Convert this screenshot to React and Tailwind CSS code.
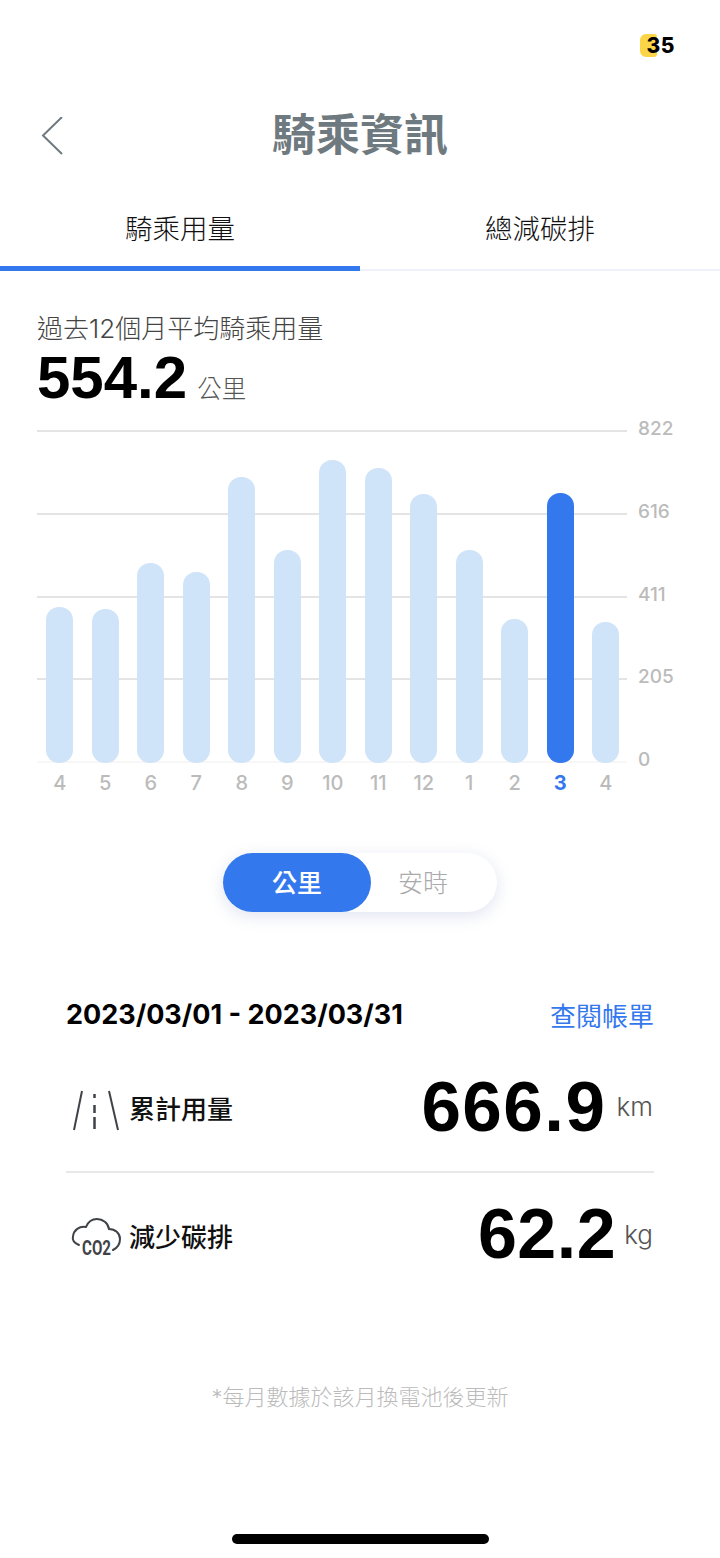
const FONT = "font-['Inter','Noto_Sans_CJK_TC',sans-serif]"
const NUM = "font-['Liberation_Sans',sans-serif]"

const bars = [
  { month: 4, top: 607 },
  { month: 5, top: 609 },
  { month: 6, top: 563 },
  { month: 7, top: 572 },
  { month: 8, top: 477 },
  { month: 9, top: 550 },
  { month: 10, top: 460 },
  { month: 11, top: 468 },
  { month: 12, top: 494 },
  { month: 1, top: 550 },
  { month: 2, top: 619 },
  { month: 3, top: 493, active: true },
  { month: 4, top: 622 },
]

const axis = ['822', '616', '411', '205', '0']

function RoadIcon() {
  return (
    <svg width="60" height="50" viewBox="0 0 60 50" fill="none" stroke="#3f4347" strokeWidth="2">
      <path d="M16 7 L8 46" />
      <path d="M43 7 L52 46" />
      <path d="M28.5 10 V14 M28.5 21 V29 M28.5 33 V45" strokeWidth="2.5" />
    </svg>
  )
}

function CloudIcon() {
  return (
    <svg width="60" height="50" viewBox="0 0 60 50" fill="none" stroke="#3f4347" strokeWidth="2" strokeLinecap="round">
      <path d="M13 33 C8 31 6 28 7 24 C8 18 13 14 20 15 C22 10 26 7 31 7 C37 7 42 11 43 17 C49 17 54 21 54 27 C54 32 51 36 47 38" />
      <text x="16" y="43" fontSize="20" fontWeight="700" fill="#3f4347" stroke="none" textLength="29" lengthAdjust="spacingAndGlyphs" fontFamily="Roboto, sans-serif">CO2</text>
    </svg>
  )
}

export default function App() {
  return (
    <div className={`${FONT} relative w-[720px] h-[1558px] bg-white overflow-hidden`}>

      {/* status bar */}
      <div className="h-[90px] flex justify-end items-start pt-[34px] pr-[45px]">
        <div className="relative h-[23px] flex items-center pl-[6px]">
          <span className="absolute left-[-1px] top-0 w-[17px] h-[23px] rounded-l-[6px] rounded-r-[3px] bg-[#fbd548]" />
          <span className="relative text-[21px] leading-none font-extrabold text-black tracking-[0.5px]">35</span>
        </div>
      </div>

      {/* header */}
      <div className="relative h-[90px] flex items-center justify-center">
        <svg className="absolute left-[41px] top-[27px]" width="24" height="38" viewBox="0 0 24 38" fill="none" stroke="#6f7a80" strokeWidth="2">
          <path d="M21 0 L2 18.5 L21 37" />
        </svg>
        <h1 className="text-[44px] leading-none font-bold text-[#6f7a80]">騎乘資訊</h1>
      </div>

      {/* tabs */}
      <div className="flex h-[91px] border-b-2 border-[#eef0fb]">
        <div className="w-1/2 h-[91px] border-b-[5px] border-[#3478ee] flex justify-center pt-[29px]">
          <span className="text-[27.5px] leading-[40px] font-light text-[#111]">騎乘用量</span>
        </div>
        <div className="w-1/2 flex justify-center pt-[29px]">
          <span className="text-[27.5px] leading-[40px] font-light text-[#111]">總減碳排</span>
        </div>
      </div>

      {/* summary */}
      <div className="px-[37px] pt-[38px]">
        <p className="text-[26px] leading-[40px] font-light text-[#444]">過去12個月平均騎乘用量</p>
        <div className="flex items-baseline gap-[10px] h-[58px]">
          <span className={`${NUM} text-[60px] leading-[58px] font-bold text-black`}>554.2</span>
          <span className="text-[24.5px] font-light text-[#555]">公里</span>
        </div>
      </div>

      {/* chart */}
      <div className="relative h-[333px] mt-[23px]">
        <div className="absolute inset-0 flex flex-col justify-between">
          {axis.map((v, i) => (
            <div key={v} className="relative h-[2px] ml-[37px] w-[590px] bg-[#e4e4e4]" style={i === 4 ? { backgroundColor: '#f7f7f7' } : undefined}>
              <span className="absolute left-[601px] top-[-12px] text-[19px] leading-[22px] font-medium text-[#bbbbbb]">{v}</span>
            </div>
          ))}
        </div>
        <div className="relative h-[333px] pl-[37px] flex items-end">
          {bars.map((b, i) => (
            <div key={i} className="w-[45.5px] flex justify-center">
              <div
                className={`w-[27px] rounded-[13px] ${b.active ? 'bg-[#3478ee]' : 'bg-[#cfe3f9]'}`}
                style={{ height: 763 - b.top }}
              />
            </div>
          ))}
        </div>
      </div>

      {/* months */}
      <div className="flex pl-[37px] h-[30px] pt-[8px]">
        {bars.map((b, i) => (
          <div
            key={i}
            className={`w-[45.5px] text-center text-[20px] leading-[24px] ${b.active ? 'font-bold text-[#3478ee]' : 'font-medium text-[#bbbbbb]'}`}
          >
            {b.month}
          </div>
        ))}
      </div>

      {/* unit toggle */}
      <div className="flex justify-center pt-[60px]">
        <div className="w-[274px] h-[59px] flex rounded-full bg-white shadow-[0_4px_16px_rgba(120,130,190,0.22)]">
          <div className="w-[148px] rounded-full bg-[#3478ee] flex items-center justify-center pt-[3px] text-[25px] font-medium text-white">公里</div>
          <div className="flex-1 flex items-center justify-center pt-[3px] pr-[22px] text-[25px] font-light text-[#aaaaaa]">安時</div>
        </div>
      </div>

      {/* billing period */}
      <div className="px-[66px] pt-[83px]">
        <div className="flex items-center justify-between h-[40px]">
          <span className="text-[27px] font-bold text-black">2023/03/01 - 2023/03/31</span>
          <span className="pt-[3px] text-[26px] text-[#3478ee]">查閱帳單</span>
        </div>

        <div className="flex items-center justify-between h-[138px] pt-[12px] border-b-2 border-[#e8e8e8]">
          <div className="flex items-center gap-[3px]">
            <RoadIcon />
            <span className="pt-[1px] text-[26px] font-medium text-[#111]">累計用量</span>
          </div>
          <div className="flex items-center gap-[10px] pb-[6px] pr-[1px]">
            <span className={`${NUM} text-[71px] leading-none tracking-[1.5px] font-bold text-black`}>666.9</span>
            <span className="text-[26px] font-light text-[#555]">km</span>
          </div>
        </div>

        <div className="flex items-center justify-between h-[128px]">
          <div className="flex items-center gap-[3px]">
            <CloudIcon />
            <span className="pt-[1px] text-[26px] font-medium text-[#111]">減少碳排</span>
          </div>
          <div className="flex items-center gap-[8px] pb-[6px] pr-[1px]">
            <span className={`${NUM} text-[70px] leading-none tracking-[0.5px] font-bold text-black`}>62.2</span>
            <span className="text-[26px] font-light text-[#555]">kg</span>
          </div>
        </div>
      </div>

      <p className="text-center text-[22px] leading-[30px] font-light text-[#bbbbbb] pt-[81px]">*每月數據於該月換電池後更新</p>

      {/* home indicator */}
      <div className="absolute left-[232px] bottom-[14px] w-[257px] h-[10px] rounded-full bg-black" />
    </div>
  )
}
